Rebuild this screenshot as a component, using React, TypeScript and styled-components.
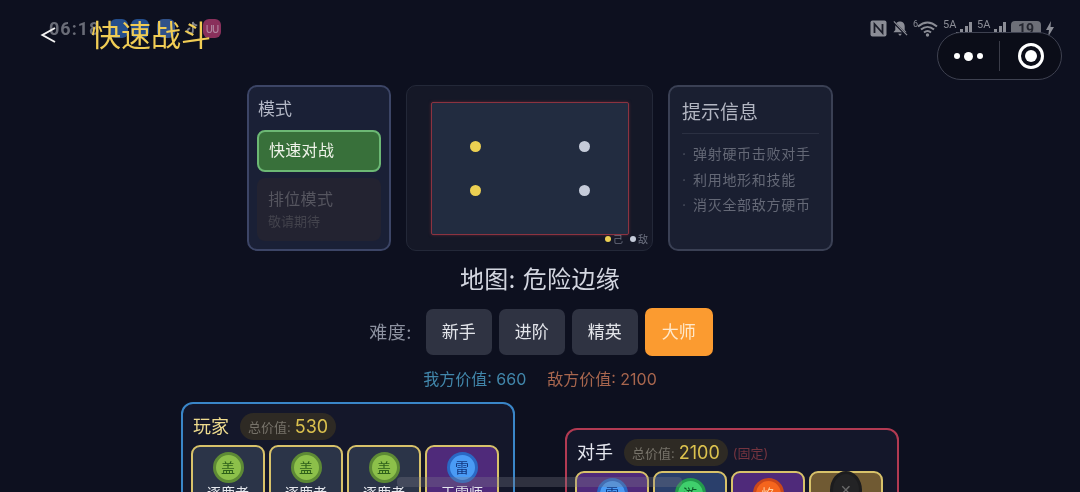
import * as React from 'react';
import styled, { createGlobalStyle } from 'styled-components';

const GlobalStyle = createGlobalStyle`
  html, body {
    margin: 0;
    padding: 0;
    background: #0d101f;
  }
  * {
    box-sizing: border-box;
  }
`;

const difficulties = ['新手', '进阶', '精英', '大师'];
const tips = ['弹射硬币击败对手', '利用地形和技能', '消灭全部敌方硬币'];

const playerCoins = [
  { name: '逐鹿者', badge: '盖', kind: 'green', bg: '#2b3448' },
  { name: '逐鹿者', badge: '盖', kind: 'green', bg: '#2b3448' },
  { name: '逐鹿者', badge: '盖', kind: 'green', bg: '#2b3448' },
  { name: '天雷师', badge: '雷', kind: 'blue', bg: '#4f2a7a' },
];
const enemyCoins = [
  { badge: '雷', kind: 'blue', bg: '#4f2a7a' },
  { badge: '游', kind: 'emerald', bg: '#2a3f6b' },
  { badge: '焰', kind: 'orange', bg: '#4f2a7a' },
  { badge: '✕', kind: 'dark', bg: '#705a33' },
];

const coinColors: Record<string, [string, string, string]> = {
  green: ['#8cc04a', '#5d8a35', '#2d5f1a'],
  blue: ['#4a9bf5', '#2a68c4', '#12367f'],
  emerald: ['#3fcf6c', '#239a4c', '#0e5a2a'],
  orange: ['#f5651d', '#c9471a', '#ffd0a0'],
  dark: ['#232325', '#1c1c1e', '#6a6a6a'],
};

const signalBars = [3, 5, 8, 11, 15];

const App: React.FC = () => {
  return (
    <Page>
      <GlobalStyle />
      <StatusLeft>
        <Clock>06:18</Clock>
        <AppTile $color="#2a5ea8" $gap={0} />
        <AppTile $color="#2a5ea8" $gap={3} />
        <AppTile $color="#3a63a5" $gap={8} />
        <NoteIcon width="14" height="18" viewBox="0 0 16 18">
          <path d="M9 2v10.500a3 3 0 1 1-3-3M9 2c.5 2.500 2.500 4 5 4" fill="none" stroke="#9a9ca4" strokeWidth="2" />
        </NoteIcon>
        <AppTile $color="#a8396b" $gap={4}>
          <svg width="13" height="9" viewBox="0 0 14 10">
            <path d="M1 1v6a2 2 0 0 0 5 0V1M8 1v6a2 2 0 0 0 5 0V1" fill="none" stroke="#d8a0bc" strokeWidth="1.300" />
          </svg>
        </AppTile>
      </StatusLeft>
      <BackIcon width="18" height="18" viewBox="0 0 18 18">
        <path d="M15 2 L2.500 9 L15 16" fill="none" stroke="#f2f2f2" strokeWidth="2" />
      </BackIcon>
      <Title>快速战斗</Title>

      <StatusRight>
        <svg width="17" height="17" viewBox="0 0 17 17">
          <rect x="0.5" y="0.5" width="16" height="16" rx="2" fill="#8b8d96" />
          <path d="M4.500 13V4l8 9V4" fill="none" stroke="#1a1c28" strokeWidth="1.800" />
        </svg>
        <svg width="16" height="17" viewBox="0 0 17 17">
          <path d="M8.500 1c3.300 0 5 2.400 5 5.400v3.600l2 2.500H1.500l2-2.500V6.400C3.500 3.400 5.200 1 8.500 1z" fill="#8b8d96" />
          <path d="M6.500 14h4l-2 2.500z" fill="#8b8d96" />
          <path d="M1.500 1.500l14 14" stroke="#0d101f" strokeWidth="2.500" />
          <path d="M2 1l14 14.500" stroke="#8b8d96" strokeWidth="1.300" />
        </svg>
        <svg width="25" height="17" viewBox="0 0 25 17">
          <text x="0" y="7" fontSize="9" fill="#8b8d96" fontFamily="Roboto, sans-serif">6</text>
          <path d="M5 6.500c6-5 13-5 19 0M8 9.500c4-3.500 9-3.500 13 0M11 12.500c2-1.700 5-1.700 7 0" fill="none" stroke="#8b8d96" strokeWidth="2" />
          <circle cx="14.500" cy="15" r="1.700" fill="#8b8d96" />
        </svg>
        <Signal>
          <SignalLabel>5A</SignalLabel>
          {signalBars.map((h, i) => (
            <SignalBar key={i} style={{ height: h }} />
          ))}
        </Signal>
        <Signal>
          <SignalLabel>5A</SignalLabel>
          {signalBars.map((h, i) => (
            <SignalBar key={i} style={{ height: h }} />
          ))}
        </Signal>
        <Battery>19</Battery>
        <svg width="8" height="16" viewBox="0 0 8 16">
          <path d="M5 0L0 9h3l-1 7 6-10H4.500z" fill="#8b8d96" />
        </svg>
      </StatusRight>

      <Capsule>
        <CapsuleSide>
          <SmallDot />
          <BigDot />
          <SmallDot />
        </CapsuleSide>
        <CapsuleDivider />
        <CapsuleSide>
          <Target>
            <TargetCore />
          </Target>
        </CapsuleSide>
      </Capsule>

      <TopRow>
        <ModePanel>
          <ModeHeading>模式</ModeHeading>
          <ActiveMode>快速对战</ActiveMode>
          <LockedMode>
            <LockedName>排位模式</LockedName>
            <LockedNote>敬请期待</LockedNote>
          </LockedMode>
        </ModePanel>

        <MapPanel>
          <MapBoard>
            <MapDot $side="own" />
            <MapDot $side="enemy" />
            <MapDot $side="own" />
            <MapDot $side="enemy" />
          </MapBoard>
          <Legend>
            <LegendDot $side="own" />己
            <LegendGap />
            <LegendDot $side="enemy" />敌
          </Legend>
        </MapPanel>

        <TipPanel>
          <TipHeading>提示信息</TipHeading>
          {tips.map((tip) => (
            <TipLine key={tip}>
              <TipMark>·</TipMark>
              {tip}
            </TipLine>
          ))}
        </TipPanel>
      </TopRow>

      <MapName>地图: 危险边缘</MapName>

      <DifficultyRow>
        <DifficultyLabel>难度:</DifficultyLabel>
        {difficulties.map((d) => (
          <DifficultyButton key={d} $active={d === '大师'}>
            {d}
          </DifficultyButton>
        ))}
      </DifficultyRow>

      <Values>
        <OwnValue>我方价值: 660</OwnValue>
        <EnemyValue>敌方价值: 2100</EnemyValue>
      </Values>

      <Teams>
        <TeamPanel $color="#3a86c8" $top={0}>
          <TeamHeader>
            <TeamName $color="#efdc8e">玩家</TeamName>
            <Total>
              总价值: <TotalNumber>530</TotalNumber>
            </Total>
          </TeamHeader>
          <CoinRow>
            {playerCoins.map((c, i) => (
              <CoinCard key={i} $bg={c.bg}>
                <Coin $kind={c.kind}>{c.badge}</Coin>
                <CoinName>{c.name}</CoinName>
              </CoinCard>
            ))}
          </CoinRow>
        </TeamPanel>

        <TeamPanel $color="#b23a52" $top={26}>
          <TeamHeader>
            <TeamName $color="#e6e8f0">对手</TeamName>
            <Total>
              总价值: <TotalNumber>2100</TotalNumber>
            </Total>
            <Fixed>(固定)</Fixed>
          </TeamHeader>
          <CoinRow>
            {enemyCoins.map((c, i) => (
              <CoinCard key={i} $bg={c.bg}>
                <Coin $kind={c.kind}>{c.badge}</Coin>
              </CoinCard>
            ))}
          </CoinRow>
        </TeamPanel>
      </Teams>

      <HomeBar />
    </Page>
  );
};

const Page = styled.div`
  position: relative;
  width: 1080px;
  height: 492px;
  overflow: hidden;
  padding-top: 85px;
  background: #0d101f;
  font-family: Inter, "Noto Sans CJK SC", sans-serif;
  filter: blur(0.4px);
  display: flex;
  flex-direction: column;
  align-items: center;
  > * {
    flex-shrink: 0;
  }
`;

const StatusLeft = styled.div`
  position: absolute;
  left: 49px;
  top: 18px;
  width: 172px;
  height: 20px;
  display: flex;
  align-items: center;
  opacity: 0.8;
`;

const Clock = styled.span`
  width: 61px;
  font-family: Roboto, sans-serif;
  font-size: 18px;
  font-weight: 700;
  letter-spacing: 1px;
  color: #80838d;
`;

const AppTile = styled.span<{ $color: string; $gap: number }>`
  width: 18px;
  height: 19px;
  margin-left: ${({ $gap }) => $gap}px;
  border-radius: 6px;
  background: ${({ $color }) => $color};
  display: flex;
  align-items: center;
  justify-content: center;
`;

const NoteIcon = styled.svg`
  margin-left: 10px;
`;

const BackIcon = styled.svg`
  position: absolute;
  left: 40px;
  top: 26px;
`;

const Title = styled.div`
  position: absolute;
  left: 91px;
  top: 14px;
  font-size: 30px;
  line-height: 42px;
  color: #f1cd55;
`;

const StatusRight = styled.div`
  position: absolute;
  left: 870px;
  top: 20px;
  display: flex;
  align-items: center;
  gap: 5px;
`;

const Signal = styled.div`
  position: relative;
  width: 29px;
  height: 17px;
  display: flex;
  align-items: flex-end;
  justify-content: flex-end;
  gap: 1.500px;
`;

const SignalLabel = styled.span`
  position: absolute;
  left: 0;
  top: -1px;
  font-family: Roboto, sans-serif;
  font-size: 11px;
  line-height: 11px;
  color: #8b8d96;
`;

const SignalBar = styled.span`
  width: 3px;
  background: #8b8d96;
`;

const Battery = styled.div`
  width: 30px;
  height: 16px;
  border-radius: 4px;
  background: #6d6f78;
  color: #23252f;
  font-family: Roboto, sans-serif;
  font-size: 14px;
  font-weight: 700;
  line-height: 16px;
  text-align: center;
`;

const Capsule = styled.div`
  position: absolute;
  left: 937px;
  top: 32px;
  width: 125px;
  height: 48px;
  border: 1px solid #3e4150;
  border-radius: 24px;
  background: #0b0d18;
  display: flex;
  align-items: center;
`;

const CapsuleSide = styled.div`
  flex: 1;
  display: flex;
  align-items: center;
  justify-content: center;
  gap: 4px;
`;

const CapsuleDivider = styled.div`
  width: 1px;
  height: 30px;
  background: #3a3c48;
`;

const SmallDot = styled.span`
  width: 6px;
  height: 6px;
  border-radius: 50%;
  background: #fff;
`;

const BigDot = styled.span`
  width: 9px;
  height: 9px;
  border-radius: 50%;
  background: #fff;
`;

const Target = styled.div`
  width: 26px;
  height: 26px;
  border: 3px solid #fff;
  border-radius: 50%;
  display: flex;
  align-items: center;
  justify-content: center;
`;

const TargetCore = styled.span`
  width: 12px;
  height: 12px;
  border-radius: 50%;
  background: #fff;
`;

const TopRow = styled.div`
  display: flex;
  gap: 15px;
  height: 166px;
`;

const ModePanel = styled.section`
  width: 144px;
  padding: 7px 8px 0;
  border: 2px solid #3c4566;
  border-radius: 10px;
  background: #1a2036;
`;

const ModeHeading = styled.div`
  font-size: 17px;
  line-height: 30px;
  padding-left: 1px;
  color: #b4b8c6;
`;

const ActiveMode = styled.div`
  height: 42px;
  margin-top: 6px;
  padding-left: 10px;
  border: 2px solid #6cb874;
  border-radius: 8px;
  background: #38703a;
  color: #f0f3ea;
  font-size: 16px;
  letter-spacing: 0.3px;
  line-height: 36px;
`;

const LockedMode = styled.div`
  height: 63px;
  margin-top: 6px;
  padding: 9px 11px 0;
  border-radius: 8px;
  background: #232331;
`;

const LockedName = styled.div`
  font-size: 16px;
  line-height: 24px;
  letter-spacing: 0.3px;
  color: #55555f;
`;

const LockedNote = styled.div`
  margin-top: 0;
  font-size: 13px;
  line-height: 20px;
  color: #43434d;
`;

const MapPanel = styled.section`
  position: relative;
  width: 247px;
  padding: 16px 24px 0 24px;
  border: 1px solid #232838;
  border-radius: 10px;
  background: #151827;
`;

const MapBoard = styled.div`
  width: 198px;
  height: 133px;
  padding-top: 38px;
  border: 1px solid #8c3340;
  border-radius: 2px;
  box-shadow: 0 0 3px rgba(140, 50, 65, 0.6);
  background: #222c40;
  display: grid;
  grid-template-columns: 109px 11px;
  grid-auto-rows: 44px;
  justify-content: center;
`;

const dotColor = (side: string) => (side === 'own' ? '#ecd052' : '#c5cbd9');

const MapDot = styled.span<{ $side: string }>`
  width: 11px;
  height: 11px;
  border-radius: 50%;
  background: ${({ $side }) => dotColor($side)};
`;

const Legend = styled.div`
  position: absolute;
  right: 4px;
  bottom: 4px;
  display: flex;
  align-items: center;
  font-size: 10px;
  line-height: 14px;
  color: #6d7180;
`;

const LegendDot = styled.span<{ $side: string }>`
  width: 6px;
  height: 6px;
  margin-right: 2px;
  border-radius: 50%;
  background: ${({ $side }) => dotColor($side)};
`;

const LegendGap = styled.span`
  width: 7px;
`;

const TipPanel = styled.section`
  width: 165px;
  padding: 11px 12px 0;
  border: 2px solid #3a4054;
  border-radius: 10px;
  background: #1a1f31;
`;

const TipHeading = styled.div`
  font-size: 19px;
  line-height: 30px;
  padding-bottom: 5px;
  margin-bottom: 7px;
  border-bottom: 1px solid #2b3042;
  color: #b3b6c2;
`;

const TipLine = styled.div`
  font-size: 14px;
  line-height: 25.500px;
  white-space: nowrap;
  letter-spacing: 0.7px;
  color: #646876;
`;

const TipMark = styled.span`
  display: inline-block;
  width: 11px;
  color: #4c5060;
`;

const MapName = styled.div`
  margin-top: 11px;
  font-size: 24px;
  line-height: 36px;
  letter-spacing: 0.3px;
  color: #d3d6e0;
`;

const DifficultyRow = styled.div`
  margin-top: 10px;
  padding-left: 2px;
  display: flex;
  align-items: center;
  gap: 7px;
`;

const DifficultyLabel = styled.span`
  margin-right: 7px;
  padding-bottom: 2px;
  font-size: 18px;
  letter-spacing: 0.5px;
  color: #8d92a0;
`;

const DifficultyButton = styled.div<{ $active?: boolean }>`
  width: ${({ $active }) => ($active ? 68 : 66)}px;
  height: ${({ $active }) => ($active ? 48 : 46)}px;
  padding-bottom: 3px;
  border-radius: 7px;
  background: ${({ $active }) => ($active ? '#fb9b30' : '#2f3342')};
  color: ${({ $active }) => ($active ? '#ffe9cc' : '#e3e5ea')};
  font-size: 17px;
  display: flex;
  align-items: center;
  justify-content: center;
`;

const Values = styled.div`
  margin-top: 11px;
  display: flex;
  gap: 21px;
  font-size: 16px;
  line-height: 24px;
`;

const OwnValue = styled.span`
  color: #4186aa;
`;

const EnemyValue = styled.span`
  color: #a8664e;
`;

const Teams = styled.div`
  margin-top: 11px;
  display: flex;
  gap: 50px;
`;

const TeamPanel = styled.section<{ $color: string; $top: number }>`
  width: 334px;
  height: 180px;
  margin-top: ${({ $top }) => $top}px;
  padding: 9px 8px 0;
  border: 2px solid ${({ $color }) => $color};
  border-radius: 12px;
  background: #14172a;
`;

const TeamHeader = styled.div`
  height: 27px;
  margin-bottom: 5px;
  padding-left: 2px;
  display: flex;
  align-items: center;
  gap: 11px;
`;

const TeamName = styled.span<{ $color: string }>`
  padding-bottom: 3px;
  font-size: 18px;
  color: ${({ $color }) => $color};
`;

const Total = styled.span`
  height: 27px;
  padding: 0 8px;
  border-radius: 14px;
  background: #2e2a24;
  color: #77736a;
  font-size: 13px;
  white-space: nowrap;
  display: flex;
  align-items: center;
  gap: 4px;
`;

const TotalNumber = styled.span`
  font-size: 18px;
  color: #dcc24e;
`;

const Fixed = styled.span`
  margin-left: -6px;
  font-size: 13px;
  color: #74343f;
`;

const CoinRow = styled.div`
  display: flex;
  gap: 4px;
`;

const CoinCard = styled.div<{ $bg: string }>`
  width: 74px;
  height: 90px;
  padding-top: 5px;
  border: 2px solid #d8c26a;
  border-radius: 9px;
  background: ${({ $bg }) => $bg};
  display: flex;
  flex-direction: column;
  align-items: center;
`;

const Coin = styled.div<{ $kind: string }>`
  width: ${({ $kind }) => ($kind === 'dark' ? 32 : 31)}px;
  height: ${({ $kind }) => ($kind === 'dark' ? 38 : 31)}px;
  margin-top: ${({ $kind }) => ($kind === 'dark' ? -7 : 0)}px;
  border-radius: 50%;
  border: 3px solid ${({ $kind }) => coinColors[$kind][1]};
  background: ${({ $kind }) => coinColors[$kind][0]};
  color: ${({ $kind }) => coinColors[$kind][2]};
  font-size: 14px;
  line-height: ${({ $kind }) => ($kind === 'dark' ? 32 : 25)}px;
  text-align: center;
`;

const CoinName = styled.div`
  font-size: 14px;
  line-height: 20px;
  color: #e6e8ee;
`;

const HomeBar = styled.div`
  position: absolute;
  left: 397px;
  top: 477px;
  width: 285px;
  height: 10px;
  background: rgba(125, 127, 138, 0.3);
  border-radius: 4px;
`;

export default App;
